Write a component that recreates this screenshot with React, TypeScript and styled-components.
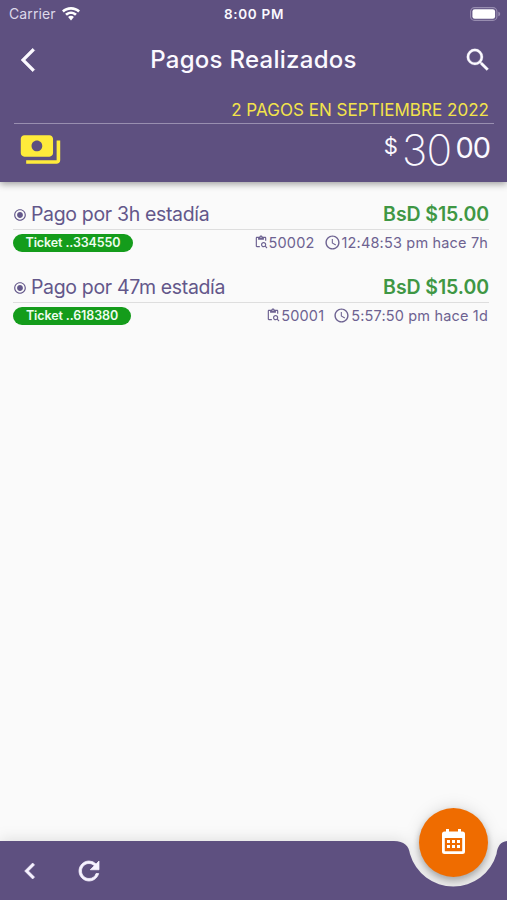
import React from "react";
import styled, { createGlobalStyle } from "styled-components";
import {
  MdAccessTime,
  MdArrowBackIosNew,
  MdChevronLeft,
  MdContentPasteSearch,
  MdPayments,
  MdRadioButtonChecked,
  MdRefresh,
  MdSearch,
} from "react-icons/md";

const PURPLE = "#5e5080";

const GlobalStyle = createGlobalStyle`
  * { box-sizing: border-box; }
  body { margin: 0; background: #fafafa; font-family: Inter, "Liberation Sans", sans-serif; }
  svg { display: block; flex: none; }
`;

const Screen = styled.div`
  display: flex;
  flex-direction: column;
  width: 507px;
  height: 900px;
  overflow: hidden;
  background: #fafafa;
`;

const Header = styled.header`
  height: 182px;
  flex: none;
  background: ${PURPLE};
  color: #fbf9ff;
  box-shadow: 0 2px 7px rgba(0, 0, 0, 0.38);
`;

const StatusBar = styled.div`
  display: grid;
  grid-template-columns: 1fr auto 1fr;
  align-items: center;
  height: 27px;
  padding: 0 6px 0 9px;
`;

const Carrier = styled.div`
  display: flex;
  align-items: center;
  gap: 6px;
  font-size: 14px;
  letter-spacing: 0.12px;
  color: #ddd8ea;
`;

const Clock = styled.div`
  margin-right: 2px;
  font-size: 13.5px;
  font-weight: 600;
  letter-spacing: 0.7px;
`;

const BatterySlot = styled.div`
  display: flex;
  justify-content: flex-end;
`;

const TitleBar = styled.div`
  display: grid;
  grid-template-columns: 60px 1fr 60px;
  align-items: center;
  height: 65px;
  padding: 0 14px;
`;

const IconButton = styled.button<{ $end?: boolean; $stroke?: number }>`
  display: flex;
  justify-content: ${(p) => (p.$end ? "flex-end" : "flex-start")};
  padding: 0;
  border: 0;
  background: none;
  color: inherit;

  svg {
    stroke: none;
  }

  path:not([fill="none"]) {
    stroke: currentColor;
    stroke-width: ${(p) => p.$stroke ?? 0};
  }
`;

const Title = styled.h1`
  margin: 0;
  text-align: center;
  font-size: 24px;
  font-weight: 500;
  letter-spacing: 0.27px;
  white-space: nowrap;
`;

const Period = styled.div`
  height: 32px;
  margin: 0 13px 0 14px;
  padding-right: 5px;
  border-bottom: 1px solid #998fb0;
  color: #f3e34b;
  text-align: right;
  font-size: 17px;
  letter-spacing: 0.03px;
  line-height: 37px;
  white-space: nowrap;
`;

const Summary = styled.div`
  display: flex;
  justify-content: space-between;
  padding: 4px 17px 0 19px;
  color: #ffeb3b;
`;

const Total = styled.div`
  display: flex;
  align-items: flex-start;
  color: #fbf9ff;
`;

const Dollar = styled.span`
  padding-right: 4px;
  font-size: 22px;
  line-height: 37px;
`;

const Whole = styled.span`
  font-size: 42.5px;
  font-weight: 200;
  line-height: 43px;
  letter-spacing: -0.6px;
`;

const Cents = styled.span`
  padding-left: 4px;
  font-size: 29px;
  font-weight: 400;
  line-height: 39px;
  letter-spacing: -1.1px;
`;

const List = styled.main`
  flex: 1;
  padding: 17px 18px 0 13px;
`;

const Payment = styled.article`
  height: 73px;
  color: #63578a;
`;

const PaymentTop = styled.div`
  display: flex;
  align-items: center;
  height: 31px;
  border-bottom: 1px solid #dedede;
`;

const Bullet = styled(MdRadioButtonChecked)`
  margin-top: 2px;
`;

const Concept = styled.div`
  flex: 1;
  padding-left: 4px;
  font-size: 19.5px;
  letter-spacing: -0.34px;
`;

const Amount = styled.div`
  color: #3f9744;
  font-size: 19.5px;
  font-weight: 600;
  letter-spacing: -0.08px;
`;

const PaymentBottom = styled.div`
  display: flex;
  align-items: center;
  justify-content: space-between;
  height: 26px;
`;

const Ticket = styled.div<{ $width: number }>`
  width: ${(p) => p.$width}px;
  height: 18px;
  border-radius: 9px;
  background: #149c1b;
  color: #effcef;
  text-align: center;
  font-size: 12.5px;
  font-weight: 600;
  line-height: 18px;
  letter-spacing: -0.1px;
`;

const Details = styled.div`
  display: flex;
  gap: 9px;
  padding: 0 1px 2px 0;
  font-size: 14.5px;
  letter-spacing: 0.17px;
  color: #6d6291;
  white-space: nowrap;
`;

const Detail = styled.span`
  display: flex;
  align-items: center;
  gap: 1px;
`;

const BottomBar = styled.nav`
  position: relative;
  display: flex;
  flex: none;
  height: 59px;
  color: #f6f2ff;
  filter: drop-shadow(0 -2px 7px rgba(0, 0, 0, 0.1));
`;

const BarActions = styled.div`
  display: flex;
  align-items: center;
  gap: 28px;
  width: 390px;
  padding-left: 14px;
  background: ${PURPLE};
`;

const CalendarButton = styled.button`
  position: absolute;
  left: 419px;
  top: -33px;
  display: flex;
  align-items: center;
  justify-content: center;
  width: 69px;
  height: 69px;
  padding: 0 0 2px;
  border: 0;
  border-radius: 50%;
  background: #ef6c00;
  color: #fff;
  box-shadow: 0 4px 7px rgba(0, 0, 0, 0.3);
`;

const Wifi = () => (
  <svg width="18" height="14" viewBox="0 0 18 14" fill="#fff">
    <path d="M9 0C5.500 0 2.400 1.300 0 3.600L1.800 5.500C3.700 3.700 6.200 2.700 9 2.700s5.300 1 7.200 2.800L18 3.600C15.600 1.300 12.500 0 9 0Z" />
    <path d="M9 4.400c-2.300 0-4.400.9-5.900 2.400L5 8.700c1-1 2.500-1.600 4-1.600s3 .6 4 1.600l1.900-1.900C13.400 5.300 11.300 4.400 9 4.400Z" />
    <path d="M9 8.800c-1.100 0-2.100.4-2.900 1.100L9 13.400l2.900-3.500C11.100 9.200 10.100 8.800 9 8.800Z" />
  </svg>
);

const Battery = () => (
  <svg width="31" height="14" viewBox="0 0 31 14">
    <rect x=".6" y=".6" width="26.300" height="12.800" rx="4" fill="none" stroke="#988db0" strokeWidth="1.100" />
    <rect x="2.400" y="2.300" width="22.700" height="9.400" rx="2.300" fill="#fff" />
    <path d="M28.300 4.700v4.600c1-.3 1.900-1.200 1.900-2.300s-.9-2-1.900-2.300Z" fill="#988db0" />
  </svg>
);

const Notch = () => (
  <svg width="117" height="59" viewBox="0 0 117 59">
    <path d="M0 0H4C14 0 19 5 20 13a45 45 0 0 0 86.500 0C107.500 5 111 0 118 0V59H0Z" fill={PURPLE} />
  </svg>
);

const Calendar = () => (
  <svg width="23" height="25" viewBox="0 0 23 25" fill="currentColor">
    <path
      fillRule="evenodd"
      d="M4 0h3v2.500h9V0h3v2.500h1.500A2.500 2.500 0 0 1 23 5v17.500a2.500 2.500 0 0 1-2.500 2.500h-18A2.500 2.500 0 0 1 0 22.500V5a2.500 2.500 0 0 1 2.500-2.500H4ZM2.800 9v13.200h17.400V9Z"
    />
    <path d="M5 11h3v3H5ZM10 11h3v3h-3ZM15 11h3v3h-3ZM5 16h3v3H5ZM10 16h3v3h-3ZM15 16h3v3h-3Z" />
  </svg>
);

const payments = [
  { concept: "Pago por 3h estadía", ticket: "334550", width: 120, order: "50002", time: "12:48:53 pm hace 7h" },
  { concept: "Pago por 47m estadía", ticket: "618380", width: 118, order: "50001", time: "5:57:50 pm hace 1d" },
];

export default function App() {
  return (
    <>
      <GlobalStyle />
      <Screen>
        <Header>
          <StatusBar>
            <Carrier>
              Carrier <Wifi />
            </Carrier>
            <Clock>8:00 PM</Clock>
            <BatterySlot>
              <Battery />
            </BatterySlot>
          </StatusBar>
          <TitleBar>
            <IconButton $stroke={0.4} aria-label="Volver">
              <MdArrowBackIosNew size={28} />
            </IconButton>
            <Title>Pagos Realizados</Title>
            <IconButton $end $stroke={0.2} aria-label="Buscar">
              <MdSearch size={30} />
            </IconButton>
          </TitleBar>
          <Period>2 PAGOS EN SEPTIEMBRE 2022</Period>
          <Summary>
            <MdPayments size={43} />
            <Total>
              <Dollar>$</Dollar>
              <Whole>30</Whole>
              <Cents>00</Cents>
            </Total>
          </Summary>
        </Header>
        <List>
          {payments.map((p) => (
            <Payment key={p.order}>
              <PaymentTop>
                <Bullet size={14} />
                <Concept>{p.concept}</Concept>
                <Amount>BsD $15.00</Amount>
              </PaymentTop>
              <PaymentBottom>
                <Ticket $width={p.width}>Ticket ..{p.ticket}</Ticket>
                <Details>
                  <Detail>
                    <MdContentPasteSearch size={14} />
                    {p.order}
                  </Detail>
                  <Detail>
                    <MdAccessTime size={17} />
                    {p.time}
                  </Detail>
                </Details>
              </PaymentBottom>
            </Payment>
          ))}
        </List>
        <BottomBar>
          <BarActions>
            <IconButton $stroke={0.5} aria-label="Anterior">
              <MdChevronLeft size={32} />
            </IconButton>
            <IconButton $stroke={0.6} aria-label="Recargar">
              <MdRefresh size={30} />
            </IconButton>
          </BarActions>
          <Notch />
          <CalendarButton aria-label="Calendario">
            <Calendar />
          </CalendarButton>
        </BottomBar>
      </Screen>
    </>
  );
}
